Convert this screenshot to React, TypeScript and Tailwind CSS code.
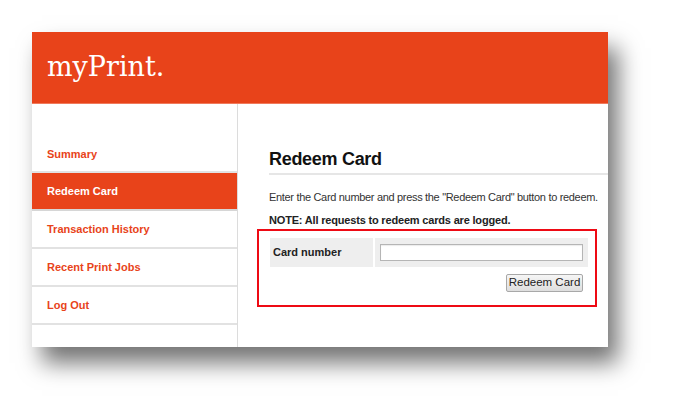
import React from 'react';

const navItems = ['Summary', 'Redeem Card', 'Transaction History', 'Recent Print Jobs', 'Log Out'];

export default function App() {
    return (
        <div className="w-[673px] h-[412px] bg-white pt-[32px] pl-[32px]" style={{ fontFamily: '"Liberation Sans", Arial, sans-serif' }}>
            <div className="w-[576px] h-[315px] flex flex-col bg-white shadow-[10px_16px_22px_rgba(0,0,0,0.55)] overflow-hidden">
                <div className="h-[72px] bg-[#e8431a] border-b border-[#f07a5c] flex items-center pl-[15px]">
                    <span className="text-white text-[27px] leading-none pb-[2px]" style={{ fontFamily: '"DejaVu Serif", serif' }}>myPrint.</span>
                </div>
                <div className="flex flex-1">
                    <div className="w-[206px] shrink-0 border-r border-[#dcdcdc] pt-[31px]">
                        {navItems.map((item) => {
                            const active = item === 'Redeem Card';
                            return (
                                <div
                                    key={item}
                                    className={`h-[38px] flex items-center pl-[15px] text-[11px] font-bold border-b-2 ${
                                        active ? 'bg-[#e8431a] text-white border-[#d6d6d6]' : 'text-[#e8431a] border-[#e2e2e2]'
                                    } ${item === 'Summary' ? 'border-b-0 pt-[2px]' : ''}`}
                                >
                                    {item}
                                </div>
                            );
                        })}
                    </div>
                    <div className="flex-1 min-w-0 pl-[20px] pt-[44px]">
                        <div className="border-b-2 border-[#e6e6e6] ml-[11px] pb-[3px]">
                            <h1 className="text-[18px] font-bold text-[#111] leading-[22px] tracking-[-0.3px]">Redeem Card</h1>
                        </div>
                        <p className="ml-[11px] mt-[15px] text-[11px] text-[#333] leading-[14px] whitespace-nowrap tracking-[-0.32px]">
                            Enter the Card number and press the "Redeem Card" button to redeem.
                        </p>
                        <p className="ml-[11px] mt-[9px] text-[11px] font-bold text-[#222] leading-[14px] whitespace-nowrap tracking-[-0.18px]">
                            NOTE: All requests to redeem cards are logged.
                        </p>
                        <div className="w-[340px] h-[78px] border-2 border-[#ee0a14] mt-[2px] -ml-[1px] pt-[7px] pl-[11px] pr-[7px]">
                            <div className="flex h-[29px] gap-[2px]">
                                <div className="w-[103px] bg-[#eeeeee] flex items-center pl-[3px] text-[11px] font-bold text-[#222]">Card number</div>
                                <div className="flex-1 bg-[#eeeeee] flex items-center pl-[5px] pr-[5px]">
                                    <input className="w-full h-[17px] bg-white border border-[#b5b5b5] shadow-[inset_0_1px_1px_rgba(0,0,0,0.08)]" />
                                </div>
                            </div>
                            <div className="flex justify-end pr-[5px] mt-[7px]">
                                <button className="h-[18px] w-[77px] whitespace-nowrap text-[11.5px] text-[#222] bg-gradient-to-b from-[#f6f6f6] to-[#dedede] border border-[#a8a8a8] rounded-[2px] leading-none">
                                    Redeem Card
                                </button>
                            </div>
                        </div>
                    </div>
                </div>
            </div>
        </div>
    );
}
